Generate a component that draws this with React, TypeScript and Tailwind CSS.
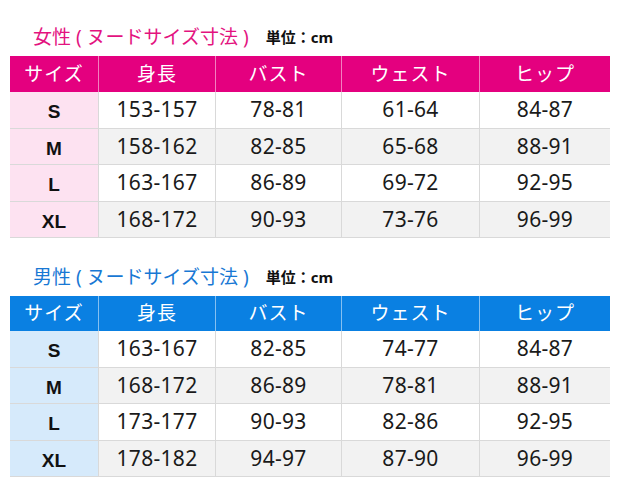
import React from "react";

type Row = string[];

const cols = "grid grid-cols-[89px_117px_126px_138px_130px]";
const heads = ["サイズ", "身長", "バスト", "ウェスト", "ヒップ"];

const women: Row[] = [
  ["S", "153-157", "78-81", "61-64", "84-87"],
  ["M", "158-162", "82-85", "65-68", "88-91"],
  ["L", "163-167", "86-89", "69-72", "92-95"],
  ["XL", "168-172", "90-93", "73-76", "96-99"],
];

const men: Row[] = [
  ["S", "163-167", "82-85", "74-77", "84-87"],
  ["M", "168-172", "86-89", "78-81", "88-91"],
  ["L", "173-177", "90-93", "82-86", "92-95"],
  ["XL", "178-182", "94-97", "87-90", "96-99"],
];

const SizeTable = ({
  title,
  rows,
  headBg,
  sideBg,
  titleColor,
  titleH,
  headH,
}: {
  title: string;
  rows: Row[];
  headBg: string;
  sideBg: string;
  titleColor: string;
  titleH: string;
  headH: string;
}) => {
  return (
    <div className="flex flex-col">
      <div className={`flex items-center pl-[23px] ${titleH}`}>
        <span className={`text-[19px] leading-none ${titleColor}`}>{title}</span>
        <span className="ml-[17px] text-[15px] font-bold leading-none text-[#111]">単位：cm</span>
      </div>

      <div className={`${cols} ${headBg} ${headH} text-white`}>
        {heads.map((h, i) => (
          <div
            key={h}
            className={`flex items-center justify-center text-[19px] tracking-[1px] ${
              i < 4 ? "border-r border-white/50" : ""
            }`}
          >
            {h}
          </div>
        ))}
      </div>

      {rows.map((r, ri) => (
        <div
          key={r[0]}
          className={`${cols} h-[36.5px] border-b border-[#d9d9d9] ${
            ri % 2 === 1 ? "bg-[#f2f2f2]" : "bg-white"
          }`}
        >
          {r.map((c, ci) =>
            ci === 0 ? (
              <div
                key={ci}
                className={`flex items-center justify-center border-r border-[#d9d9d9] pt-[5px] font-['Liberation_Sans',sans-serif] text-[19px] font-bold text-[#111] ${sideBg}`}
              >
                {c}
              </div>
            ) : (
              <div
                key={ci}
                className={`flex items-center justify-center text-[21px] tracking-[0.3px] text-[#1a1a1a] ${
                  ci < 4 ? "border-r border-[#d9d9d9]" : ""
                }`}
              >
                {c}
              </div>
            )
          )}
        </div>
      ))}
    </div>
  );
};

const App = () => {
  return (
    <div className="h-[488px] w-[620px] bg-white px-[10px] font-['Noto_Sans','Noto_Sans_CJK_JP',sans-serif]">
      <SizeTable
        title="女性 ( ヌードサイズ寸法 )"
        rows={women}
        headBg="bg-[#e4007f]"
        sideBg="bg-[#fde2f1]"
        titleColor="text-[#e3137f]"
        titleH="h-[56px] pt-[18px]"
        headH="h-[36px]"
      />
      <SizeTable
        title="男性 ( ヌードサイズ寸法 )"
        rows={men}
        headBg="bg-[#0a80e2]"
        sideBg="bg-[#d6eafb]"
        titleColor="text-[#1878d4]"
        titleH="h-[58px] pt-[20px]"
        headH="h-[35px]"
      />
    </div>
  );
};

export default App;
